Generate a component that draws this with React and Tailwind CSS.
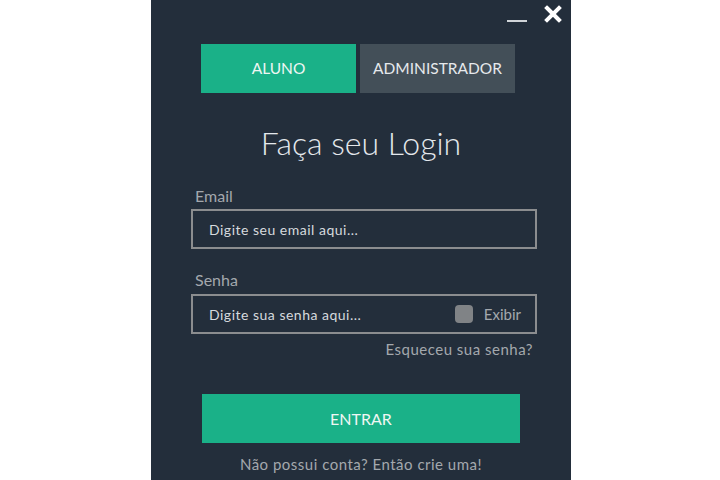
export default function App() {
  return (
    <div className="h-[480px] w-[720px] bg-white pl-[151px]">
      <div
        className="relative h-[480px] w-[420px] bg-[#232e3b] text-[#d8dde2]"
        style={{ fontFamily: '"Lato", "Open Sans", sans-serif' }}
      >
        {/* window controls */}
        <div className="absolute right-[9px] top-[5px] flex items-center gap-[17px]">
          <div className="mt-[14px] h-[2px] w-[20px] bg-[#d0d4d8]" />
          <svg width="18" height="18" viewBox="0 0 18 18">
            <path d="M3 3 L15 15 M15 3 L3 15" stroke="#ffffff" strokeWidth="4" strokeLinecap="square" />
          </svg>
        </div>

        {/* tabs */}
        <div className="flex gap-[4px] pl-[50px] pt-[44px]">
          <div className="flex h-[49px] w-[155px] items-center justify-center bg-[#1ab188] text-[15.5px] text-[#eef6f3]">
            ALUNO
          </div>
          <div className="flex h-[49px] w-[155px] items-center justify-center bg-[#434f58] text-[15.5px] text-[#e6e9ec]">
            ADMINISTRADOR
          </div>
        </div>

        <h1 className="mt-[30px] text-center text-[32px] font-light leading-[40px] text-[#e4e8ec]">Faça seu Login</h1>

        <div className="pl-[40px] pr-[34px]">
          <label className="mt-[23px] block pl-[4px] text-[16px] leading-[20px] text-[#a3a8ad]">Email</label>
          <div className="mt-[3px] flex h-[40px] items-center border-2 border-[#8b8d8f] pl-[16px] text-[14px] tracking-[0.5px] text-[#d6dade]">
            Digite seu email aqui...
          </div>

          <label className="mt-[21px] block pl-[4px] text-[16px] leading-[20px] text-[#a3a8ad]">Senha</label>
          <div className="mt-[4px] flex h-[40px] items-center justify-between border-2 border-[#8b8d8f] pl-[16px] pr-[14px] text-[14px] tracking-[0.5px] text-[#d6dade]">
            <span>Digite sua senha aqui...</span>
            <span className="flex items-center gap-[11px]">
              <span className="h-[18px] w-[18px] rounded-[4px] bg-[#808386]" />
              <span className="text-[15px] tracking-normal text-[#a3a8ad]">Exibir</span>
            </span>
          </div>

          <div className="mt-[5px] pr-[4px] text-right text-[15px] leading-[20px] tracking-[0.5px] text-[#a3a8ad]">Esqueceu sua senha?</div>
        </div>

        <div className="ml-[51px] mr-[51px] mt-[35px] flex h-[49px] items-center justify-center bg-[#1ab188] text-[16px] text-[#eef6f3]">
          ENTRAR
        </div>

        <div className="mt-[10px] text-center text-[15px] tracking-[0.5px] text-[#a3a8ad]">Não possui conta? Então crie uma!</div>
      </div>
    </div>
  );
}
